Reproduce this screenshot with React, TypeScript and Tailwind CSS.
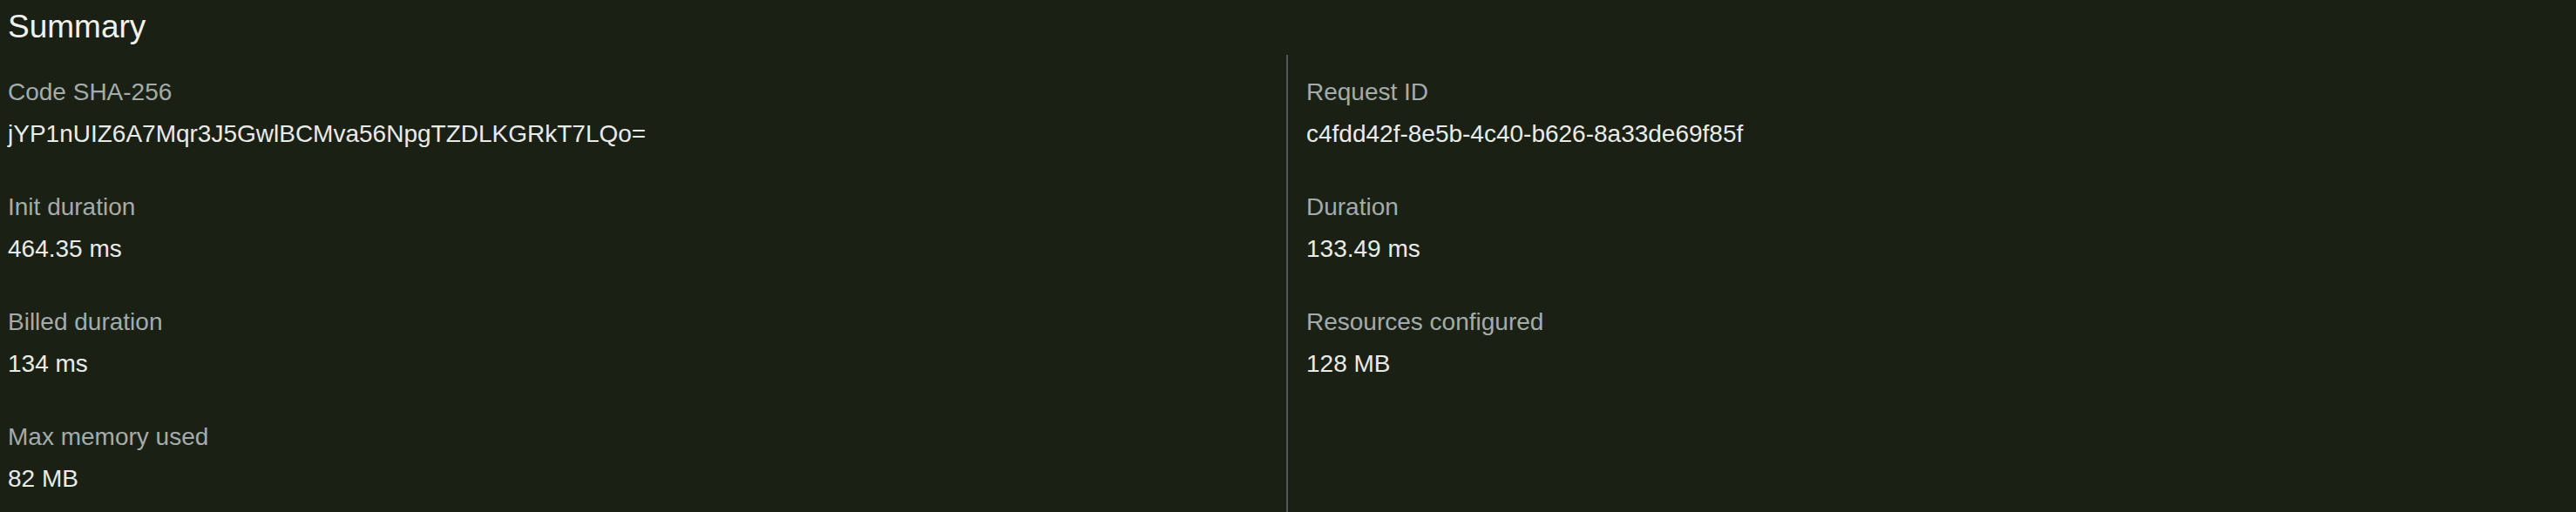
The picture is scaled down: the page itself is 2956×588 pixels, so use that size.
import React from 'react';

type Item = { label: string; value: string };

const left: Item[] = [
  { label: 'Code SHA-256', value: 'jYP1nUIZ6A7Mqr3J5GwlBCMva56NpgTZDLKGRkT7LQo=' },
  { label: 'Init duration', value: '464.35 ms' },
  { label: 'Billed duration', value: '134 ms' },
  { label: 'Max memory used', value: '82 MB' },
];

const right: Item[] = [
  { label: 'Request ID', value: 'c4fdd42f-8e5b-4c40-b626-8a33de69f85f' },
  { label: 'Duration', value: '133.49 ms' },
  { label: 'Resources configured', value: '128 MB' },
];

const Field: React.FC<{ item: Item }> = ({ item }) => (
  <div className="mb-[40px]">
    <div className="text-[28px] leading-[42px] text-[#a3acab]">{item.label}</div>
    <div className="mt-[4px] text-[28px] leading-[46px] text-[#e9ebe8]">{item.value}</div>
  </div>
);

const App: React.FC = () => {
  return (
    <div className="h-[588px] flex flex-col bg-[#1b2015] pl-[9px] pr-[13px] pt-[9px] font-['Liberation_Sans',Arial,sans-serif] overflow-hidden">
      <h2 className="text-[37px] leading-[44px] text-[#f0f2ee] mb-[10px]">Summary</h2>
      <div className="grid grid-cols-2 flex-1">
        <div className="pt-[22px]">
          {left.map((it) => (
            <Field key={it.label} item={it} />
          ))}
        </div>
        <div className="pt-[22px] pl-[21px] border-l-2 border-[#4f5a5c]">
          {right.map((it) => (
            <Field key={it.label} item={it} />
          ))}
        </div>
      </div>
    </div>
  );
};

export default App;
